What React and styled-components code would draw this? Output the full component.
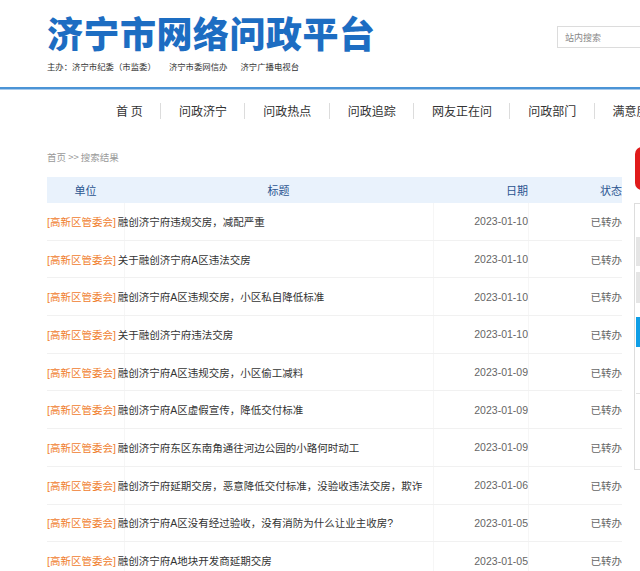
import React from "react";
import styled, { createGlobalStyle } from "styled-components";

const Global = createGlobalStyle`
  html, body { margin: 0; padding: 0; background: #fff; overflow: hidden; }
  body { font-family: "Liberation Sans", "Noto Sans CJK SC", sans-serif; color: #333; width: 640px; }
  * { box-sizing: border-box; }
`;

const Header = styled.header`
  height: 87px;
  border-bottom: 2px solid #4b94d6;
  box-shadow: 0 1px 0 #a9cbec;
  box-sizing: content-box;
`;

const HeaderInner = styled.div`
  display: flex;
  margin-left: 47px;
  width: 900px;
`;

const Brand = styled.div`
  width: 510px;
  display: flex;
  flex-direction: column;
`;

const Title = styled.h1`
  margin: 12px 0 0;
  font-family: "Noto Sans CJK SC", sans-serif;
  font-weight: 900;
  font-size: 36px;
  line-height: 40px;
  letter-spacing: 0.5px;
  color: #1d6dc2;
`;

const Sponsors = styled.div`
  display: flex;
  gap: 13px;
  margin-top: 8px;
  font-family: "Noto Sans CJK SC", sans-serif;
  font-size: 8.4px;
  line-height: 12px;
  color: #333;
`;

const Search = styled.div`
  margin-top: 26px;
  width: 200px;
  height: 22px;
  border: 1px solid #dcdcdc;
  padding-left: 7px;
  display: flex;
  align-items: center;
  font-family: "Noto Sans CJK SC", sans-serif;
  font-size: 9px;
  color: #888;
`;

const Nav = styled.nav`
  height: 44px;
  display: flex;
  align-items: center;
  padding-left: 98px;
  width: 900px;
`;

const NavItem = styled.a`
  font-family: "Noto Sans CJK SC", sans-serif;
  font-size: 12px;
  line-height: 16px;
  color: #333;
  padding: 0 17.3px 0 18px;
  border-left: ${(p) => (p.$first ? "none" : "1px solid #dcdcdc")};
  white-space: nowrap;
  text-decoration: none;
  height: 16px;
  display: flex;
  align-items: center;
`;

const Body = styled.div`
  display: flex;
  gap: 12px;
  margin-left: 47px;
  width: 900px;
`;

const Main = styled.main`
  width: 575px;
  flex: none;
`;

const Crumb = styled.div`
  margin-top: 17px;
  font-family: "Noto Sans CJK SC", sans-serif;
  font-size: 9.5px;
  line-height: 14px;
  color: #999;
`;

const Table = styled.div`
  margin-top: 13px;
  display: flex;
  flex-direction: column;
  overflow: hidden;
`;

const HeadRow = styled.div`
  display: grid;
  grid-template-columns: 77px 309px 95px 94px;
  height: 26px;
  align-items: center;
  background: #e9f2fc;
  font-family: "Noto Sans CJK SC", sans-serif;
  font-size: 11px;
  color: #2b5590;
`;

const HeadCell = styled.div`
  text-align: ${(p) => p.$align || "center"};
  white-space: nowrap;
  overflow: hidden;
`;

const Row = styled.div`
  display: grid;
  grid-template-columns: 386px 95px 94px;
  height: 37.7px;
  align-items: stretch;
  border-bottom: 1px solid #f1f1f1;
  font-size: 10.5px;
  color: #333;
`;

const TitleCell = styled.div`
  display: flex;
  align-items: center;
  white-space: nowrap;
  background: linear-gradient(to right, transparent 77px, #f6f6f6 77px, #f6f6f6 78px, transparent 78px);
`;

const Unit = styled.span`
  color: #f0802e;
  margin-right: 2px;
`;

const Cell = styled.div`
  display: flex;
  align-items: center;
  justify-content: flex-end;
  border-left: 1px solid #f6f6f6;
  color: #666;
  white-space: nowrap;
  overflow: hidden;
`;

const Side = styled.aside`
  width: 260px;
  flex: none;
  padding-top: 14px;
`;

const RedBox = styled.div`
  margin-left: 1px;
  height: 43px;
  background: #e01b1b;
  border-radius: 7px;
`;

const Panel = styled.div`
  margin-top: 13px;
  height: 267px;
  border: 1px solid #dddddd;
  padding: 33px 0 0 1px;
  display: flex;
  flex-direction: column;
`;

const Bar = styled.div`
  height: ${(p) => p.$h}px;
  margin-top: ${(p) => p.$mt}px;
  background: ${(p) => p.$c};
`;

const Divider = styled.div`
  margin-top: 46px;
  border-top: 1px solid #e2e2e2;
`;

const navItems = ["首 页", "问政济宁", "问政热点", "问政追踪", "网友正在问", "问政部门", "满意度"];

const rows = [
  ["融创济宁府违规交房，减配严重", "2023-01-10"],
  ["关于融创济宁府A区违法交房", "2023-01-10"],
  ["融创济宁府A区违规交房，小区私自降低标准", "2023-01-10"],
  ["关于融创济宁府违法交房", "2023-01-10"],
  ["融创济宁府A区违规交房，小区偷工减料", "2023-01-09"],
  ["融创济宁府A区虚假宣传，降低交付标准", "2023-01-09"],
  ["融创济宁府东区东南角通往河边公园的小路何时动工", "2023-01-09"],
  ["融创济宁府延期交房，恶意降低交付标准，没验收违法交房，欺诈", "2023-01-06"],
  ["融创济宁府A区没有经过验收，没有消防为什么让业主收房?", "2023-01-05"],
  ["融创济宁府A地块开发商延期交房", "2023-01-05"],
];

export default function App() {
  return (
    <>
      <Global />
      <Header>
        <HeaderInner>
          <Brand>
            <Title>济宁市网络问政平台</Title>
            <Sponsors>
              <span>主办：济宁市纪委（市监委）</span>
              <span>济宁市委网信办</span>
              <span>济宁广播电视台</span>
            </Sponsors>
          </Brand>
          <Search>站内搜索</Search>
        </HeaderInner>
      </Header>
      <Nav>
        {navItems.map((n, i) => (
          <NavItem key={n} $first={i === 0}>{n}</NavItem>
        ))}
      </Nav>
      <Body>
        <Main>
          <Crumb>首页 &gt;&gt; 搜索结果</Crumb>
          <Table>
            <HeadRow>
              <HeadCell>单位</HeadCell>
              <HeadCell>标题</HeadCell>
              <HeadCell $align="right">日期</HeadCell>
              <HeadCell $align="right">状态</HeadCell>
            </HeadRow>
            {rows.map(([t, d], i) => (
              <Row key={i}>
                <TitleCell>
                  <Unit>[高新区管委会]</Unit>
                  {t}
                </TitleCell>
                <Cell>{d}</Cell>
                <Cell>已转办</Cell>
              </Row>
            ))}
          </Table>
        </Main>
        <Side>
          <RedBox />
          <Panel>
            <Bar $h={29} $mt={0} $c="#e5e5e5" />
            <Bar $h={31} $mt={6} $c="#e5e5e5" />
            <Bar $h={30} $mt={14} $c="#0f9ee6" />
            <Divider />
          </Panel>
        </Side>
      </Body>
    </>
  );
}
